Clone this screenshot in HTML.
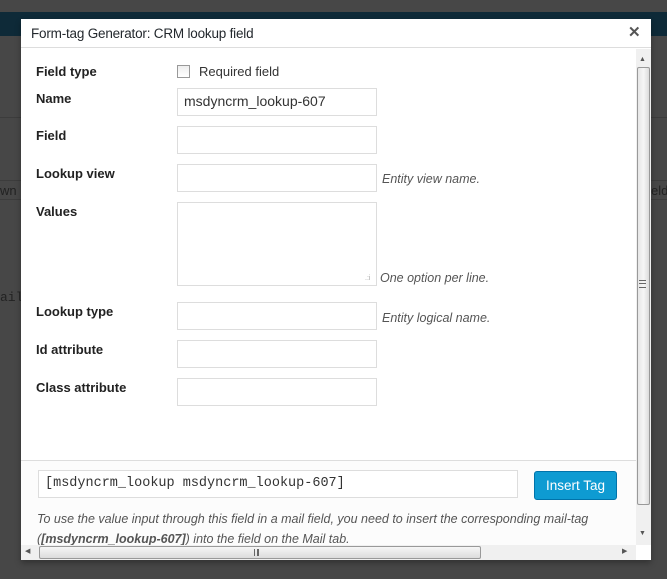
<!DOCTYPE html>
<html><head><style>
*{box-sizing:border-box;margin:0;padding:0}
body{width:667px;height:579px;background:#474747;font-family:"Liberation Sans",sans-serif;font-size:13px;color:#333;position:relative;overflow:hidden}
.abs{position:absolute;white-space:nowrap}
.lbl{position:absolute;left:36px;font-weight:bold;color:#222;font-size:13px}
.inp{position:absolute;left:177px;width:200px;height:28px;border:1px solid #ddd;background:#fff}
.hint{position:absolute;font-style:italic;color:#555;font-size:12.5px}
</style></head><body>
<div class="abs" style="left:0;top:12px;width:667px;height:24px;background:#0e2a38"></div>
<div class="abs" style="left:0;top:117px;width:21px;height:1px;background:#3c3c3c"></div>
<div class="abs" style="left:0;top:180px;width:21px;height:20px;overflow:hidden;border-top:1px solid #3c3c3c;border-bottom:1px solid #3c3c3c;color:#222;font-size:13px;line-height:19px">wn m</div>
<div class="abs" style="left:0;top:290px;width:21px;overflow:hidden;color:#222;font-family:'Liberation Mono',monospace;font-size:13px">ail</div>
<div class="abs" style="left:651px;top:117px;width:16px;height:1px;background:#3c3c3c"></div>
<div class="abs" style="left:651px;top:180px;width:16px;height:20px;overflow:hidden;border-top:1px solid #3c3c3c;border-bottom:1px solid #3c3c3c;color:#222;line-height:19px">eld</div>

<div class="abs" style="left:21px;top:19px;width:630px;height:541px;background:#fff;box-shadow:0 3px 6px rgba(0,0,0,.3)">
 <div class="abs" style="left:0;top:0;width:630px;height:29px;border-bottom:1px solid #ddd"></div>
 <div class="abs" style="left:10px;top:7px;font-size:13.5px;color:#23282d;letter-spacing:-0.2px">Form-tag Generator: CRM lookup field</div>
 <div class="abs" style="left:607px;top:4px;font-size:15px;color:#555;font-weight:bold">✕</div>
</div>
<div class="lbl" style="top:64px">Field type</div>
<div class="abs" style="left:177px;top:65px;width:13px;height:13px;border:1px solid #999;background:linear-gradient(#eee,#fff)"></div>
<div class="abs" style="left:199px;top:64px;color:#333">Required field</div>
<div class="lbl" style="top:91px">Name</div>
<div class="inp" style="top:88px;padding:4px 6px;font-size:14px;color:#333">msdyncrm_lookup-607</div>
<div class="lbl" style="top:128px">Field</div>
<div class="inp" style="top:126px"></div>
<div class="lbl" style="top:166px">Lookup view</div>
<div class="inp" style="top:164px"></div>
<div class="hint" style="left:382px;top:172px">Entity view name.</div>
<div class="lbl" style="top:204px">Values</div>
<div class="inp" style="top:202px;height:84px"></div>
<div class="abs" style="left:365px;top:275px;font-size:7px;color:#aaa">.:i</div>
<div class="hint" style="left:380px;top:271px">One option per line.</div>
<div class="lbl" style="top:304px">Lookup type</div>
<div class="inp" style="top:302px"></div>
<div class="hint" style="left:382px;top:311px">Entity logical name.</div>
<div class="lbl" style="top:342px">Id attribute</div>
<div class="inp" style="top:340px"></div>
<div class="lbl" style="top:380px">Class attribute</div>
<div class="inp" style="top:378px"></div>

<div class="abs" style="left:21px;top:460px;width:615px;height:85px;background:#fcfcfc;border-top:1px solid #ddd;overflow:hidden">
 <div class="abs" style="left:17px;top:9px;width:480px;height:28px;border:1px solid #ddd;background:#fff;font-family:'Liberation Mono',monospace;font-size:13.5px;color:#333;padding:5px 6px">[msdyncrm_lookup msdyncrm_lookup-607]</div>
 <div class="abs" style="left:513px;top:10px;width:83px;height:29px;background:#0e9bd2;border:1px solid #0073aa;border-radius:3px;color:#fff;font-size:13.5px;text-align:center;line-height:27px">Insert Tag</div>
 <div class="abs" style="left:16px;top:48px;width:590px;white-space:normal;font-style:italic;color:#555;font-size:12.5px;line-height:20px">To use the value input through this field in a mail field, you need to insert the corresponding mail-tag (<b>[msdyncrm_lookup-607]</b>) into the field on the Mail tab.</div>
</div>
<div class="abs" style="left:636px;top:49px;width:15px;height:496px;background:#f0f0f0"></div>
<div class="abs" style="left:639px;top:56px;font-size:7px;color:#555">▲</div>
<div class="abs" style="left:637px;top:67px;width:13px;height:438px;background:linear-gradient(90deg,#e6e6e6,#f6f6f6,#dcdcdc);border:1px solid #999;border-radius:2px"></div>
<div class="abs" style="left:639px;top:280px;width:7px;height:8px;border-top:1px solid #666;border-bottom:1px solid #666"></div>
<div class="abs" style="left:639px;top:283px;width:7px;height:1px;background:#666"></div>
<div class="abs" style="left:639px;top:530px;font-size:7px;color:#555">▼</div>
<div class="abs" style="left:21px;top:545px;width:615px;height:15px;background:#f0f0f0"></div>
<div class="abs" style="left:25px;top:547px;font-size:7px;color:#555">◀</div>
<div class="abs" style="left:39px;top:546px;width:442px;height:13px;background:linear-gradient(#f6f6f6,#dcdcdc);border:1px solid #999;border-radius:2px"></div>
<div class="abs" style="left:254px;top:549px;width:2px;height:7px;border-left:1px solid #666;border-right:1px solid #666;box-sizing:content-box"></div>
<div class="abs" style="left:258px;top:549px;width:1px;height:7px;background:#666"></div>
<div class="abs" style="left:622px;top:547px;font-size:7px;color:#555">▶</div>
<div class="abs" style="left:636px;top:545px;width:15px;height:15px;background:#fff"></div>
</body></html>
